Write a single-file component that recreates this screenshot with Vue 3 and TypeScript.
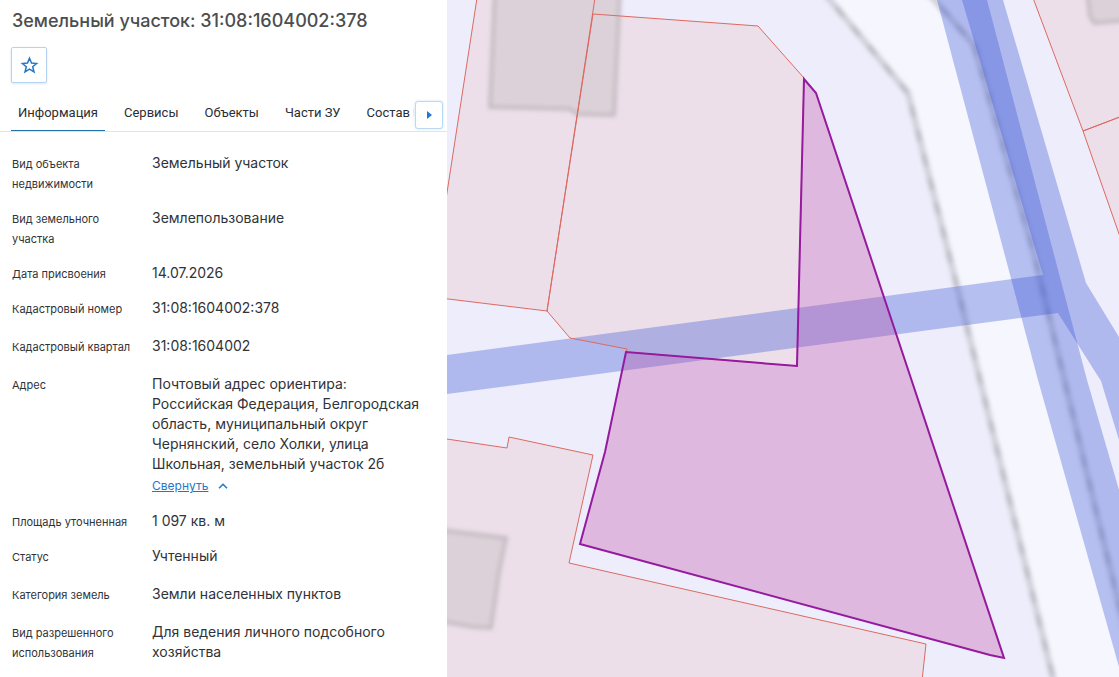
<script setup lang="ts">
import { ref } from 'vue'

interface Field {
  id: string
  label: string
  value: string
  compact?: boolean
  expandable?: boolean
}

const tabs = ['Информация', 'Сервисы', 'Объекты', 'Части ЗУ', 'Состав ЕЗП']
const activeTab = ref(0)
const favourite = ref(false)
const expanded = ref(true)

const fields: Field[] = [
  { id: 'kind', label: 'Вид объекта недвижимости', value: 'Земельный участок', compact: true },
  { id: 'landKind', label: 'Вид земельного участка', value: 'Землепользование', compact: true },
  { id: 'date', label: 'Дата присвоения', value: '14.07.2026', compact: true },
  { id: 'number', label: 'Кадастровый номер', value: '31:08:1604002:378' },
  { id: 'quarter', label: 'Кадастровый квартал', value: '31:08:1604002' },
  {
    id: 'address',
    label: 'Адрес',
    value:
      'Почтовый адрес ориентира: Российская Федерация, Белгородская область, муниципальный округ Чернянский, село Холки, улица Школьная, земельный участок 2б',
    compact: true,
    expandable: true,
  },
  { id: 'area', label: 'Площадь уточненная', value: '1 097 кв. м', compact: true },
  { id: 'status', label: 'Статус', value: 'Учтенный' },
  { id: 'category', label: 'Категория земель', value: 'Земли населенных пунктов' },
  { id: 'use', label: 'Вид разрешенного использования', value: 'Для ведения личного подсобного хозяйства' },
]

const parcels = [
  '477,-2 595,-2 547,311 440,298 440,238',
  '593,14 758,26 804,78 797,366 626,352 627,349 570,338 547,311',
  '440,438 507,448 509,437 593,455 569,563 926,644 921,690 440,690',
  '1033,-2 1083,131 1125,115 1125,-2',
  '1083,131 1125,115 1125,251',
]
const buildings = [
  '495,-10 490,107 570,109 577,114 614,115 620,-10',
  '440,530 506,538 499,572 491,628 474,627 440,621',
  '1087,-10 1090,16 1094,23 1130,20 1130,-10',
]
const kerbs = ['820,-12 908,93 958,290 1056,690', '924,-12 974,45 1033,250 1095,507 1140,690']
const zones = [
  '937,0 987,0 1087,380 1119,490 1119,667 1038,380',
  '962,0 1043,275 447,355 447,394 1058,313 1101,381 1119,440 1119,337 1086,283 1003,0',
]
</script>

<template>
  <div class="page">
    <aside class="panel">
      <h1 class="title">Земельный участок: 31:08:1604002:378</h1>

      <button
        class="favourite"
        type="button"
        aria-label="Добавить в избранное"
        :aria-pressed="favourite"
        @click="favourite = !favourite"
      >
        <svg width="20" height="20" viewBox="0 0 20 20" aria-hidden="true">
          <path d="M10.5 3.3 L12.5 8.1 L17.6 8.5 L13.7 11.8 L15 17 L10.5 14.2 L6 17 L7.3 11.8 L3.4 8.5 L8.5 8.1 Z" />
        </svg>
      </button>

      <div class="tab-bar">
        <div class="tabs" role="tablist">
          <button
            v-for="(tab, i) in tabs"
            :key="tab"
            class="tab"
            :class="{ active: i === activeTab }"
            type="button"
            role="tab"
            :aria-selected="i === activeTab"
            @click="activeTab = i"
          >
            {{ tab }}
          </button>
        </div>
        <button class="next" type="button" aria-label="Следующие вкладки">
          <svg width="5" height="8" viewBox="0 0 5 8" aria-hidden="true"><path d="M0 0 L5 4 L0 8 Z" /></svg>
        </button>
      </div>

      <dl class="fields">
        <div v-for="field in fields" :key="field.id" class="row" :class="{ compact: field.compact }">
          <dt>{{ field.label }}</dt>
          <dd>
            <span class="value" :class="{ clipped: field.expandable && !expanded }">{{ field.value }}</span>
            <a v-if="field.expandable" class="toggle" href="#" @click.prevent="expanded = !expanded">
              <span>{{ expanded ? 'Свернуть' : 'Развернуть' }}</span>
              <svg :class="{ flipped: !expanded }" width="10" height="6" viewBox="0 0 10 6" aria-hidden="true">
                <path d="M1 5.3 L5 1.2 L9 5.3" />
              </svg>
            </a>
          </dd>
        </div>
      </dl>
    </aside>

    <main class="map">
      <svg viewBox="447 0 672 677" preserveAspectRatio="xMinYMin slice" role="img" aria-label="Карта участка">
        <defs>
          <filter id="soft" x="-10%" y="-10%" width="120%" height="120%">
            <feGaussianBlur stdDeviation="2" />
          </filter>
        </defs>
        <polygon class="road" points="830,0 908,93 958,290 1053,677 1140,690 1095,507 1033,250 974,45 935,0" />
        <g filter="url(#soft)">
          <template v-for="k in kerbs" :key="k">
            <polyline class="kerb" :points="k" />
            <polyline class="kerb grain" :points="k" />
          </template>
        </g>
        <polygon v-for="p in parcels" :key="p" class="parcel" :points="p" />
        <g filter="url(#soft)">
          <polygon v-for="b in buildings" :key="b" class="building" :points="b" />
        </g>
        <polygon v-for="z in zones" :key="z" class="zone" :points="z" />
        <polygon v-for="p in parcels" :key="p" class="parcel-line" :points="p" />
        <polygon class="selected" points="804,79 816,93 1004,658 990,655 580,544 605,452 626,352 797,366" />
      </svg>
    </main>
  </div>
</template>

<style>
body {
  margin: 0;
}
</style>

<style scoped>
.page {
  display: flex;
  min-height: 100vh;
  background: #fff;
  color: #303338;
  font-family: Inter, "Liberation Sans", sans-serif;
}

.panel {
  box-sizing: border-box;
  flex: 0 1 447px;
  min-width: 0;
  padding-top: 9px;
}

.title {
  margin: 0 12px;
  color: #4b4e50;
  font-size: 18px;
  font-weight: 500;
  line-height: 24px;
}

button {
  padding: 0;
  font: inherit;
  cursor: pointer;
}

.favourite {
  box-sizing: border-box;
  display: flex;
  align-items: center;
  justify-content: center;
  width: 36px;
  height: 36px;
  margin: 14px 0 0 11px;
  border: 1px solid #b5d3f0;
  border-radius: 2px;
  background: #fff;
  box-shadow: 0 1px 3px #dbe8f5;
}

.favourite path {
  fill: none;
  stroke: #2478c4;
  stroke-width: 1.5;
}

.favourite[aria-pressed="true"] path {
  fill: #2478c4;
}

.tab-bar {
  position: relative;
  margin-top: 12px;
  border-bottom: 1px solid #dde4ec;
}

.tabs {
  display: flex;
  gap: 12px;
  margin: 0 33px 0 11px;
  overflow: hidden;
}

.tab {
  flex: none;
  height: 36px;
  padding: 0 7px;
  border: 0;
  border-bottom: 1px solid transparent;
  background: none;
  color: #2b2e33;
  font-family: Roboto, "Liberation Sans", sans-serif;
  font-size: 13px;
  line-height: 20px;
}

.tab.active {
  border-color: #1f72a8;
}

.next {
  position: absolute;
  top: 6px;
  right: 4px;
  box-sizing: border-box;
  display: flex;
  align-items: center;
  justify-content: center;
  width: 28px;
  height: 28px;
  border: 1px solid #b9d9f5;
  border-radius: 3px;
  background: #fff;
  box-shadow: 0 0 3px #cfe3f5;
}

.next path {
  fill: #1f78d8;
}

.fields {
  margin: 21px 18px 0 12px;
}

.row {
  display: grid;
  grid-template-columns: 124px 1fr;
  column-gap: 16px;
  padding-bottom: 18px;
}

.row.compact {
  padding-bottom: 15px;
}

.row:last-child {
  padding-bottom: 0;
}

dt {
  padding-top: 1px;
  margin-bottom: -1px;
  font-size: 11px;
  line-height: 20px;
}

dd {
  margin: 0;
  font-size: 14px;
  line-height: 20px;
}

.value {
  display: block;
}

.value.clipped {
  overflow: hidden;
  text-overflow: ellipsis;
  white-space: nowrap;
}

.toggle {
  display: flex;
  align-items: center;
  gap: 10px;
  margin-top: 2px;
  color: #1f78c8;
  font-size: 12px;
  text-decoration: none;
}

.toggle span {
  text-decoration: underline;
}

.toggle path {
  fill: none;
  stroke: currentColor;
  stroke-width: 1.5;
}

.flipped {
  transform: rotate(180deg);
}

.map {
  position: relative;
  flex: 1;
  min-width: 0;
  overflow: hidden;
  background: #eeedfb;
}

.map svg {
  position: absolute;
  width: 100%;
  height: 100%;
}

.road {
  fill: #f5f6fe;
}

.kerb {
  fill: none;
  stroke: #cfd0d8;
  stroke-width: 6;
}

.kerb.grain {
  stroke: #bcbdc5;
  stroke-width: 5;
  stroke-dasharray: 12 13;
}

.parcel {
  fill: #ecdfe9;
}

.parcel-line {
  fill: none;
  stroke: #dc6a62;
  stroke-width: 1;
}

.building {
  fill: #dcd1d8;
  stroke: #c6bcc3;
  stroke-width: 4;
}

.zone {
  fill: #3450d6;
  fill-opacity: 0.33;
}

.selected {
  fill: #b93f9a;
  fill-opacity: 0.3;
  stroke: #951a9f;
  stroke-width: 2;
}
</style>
